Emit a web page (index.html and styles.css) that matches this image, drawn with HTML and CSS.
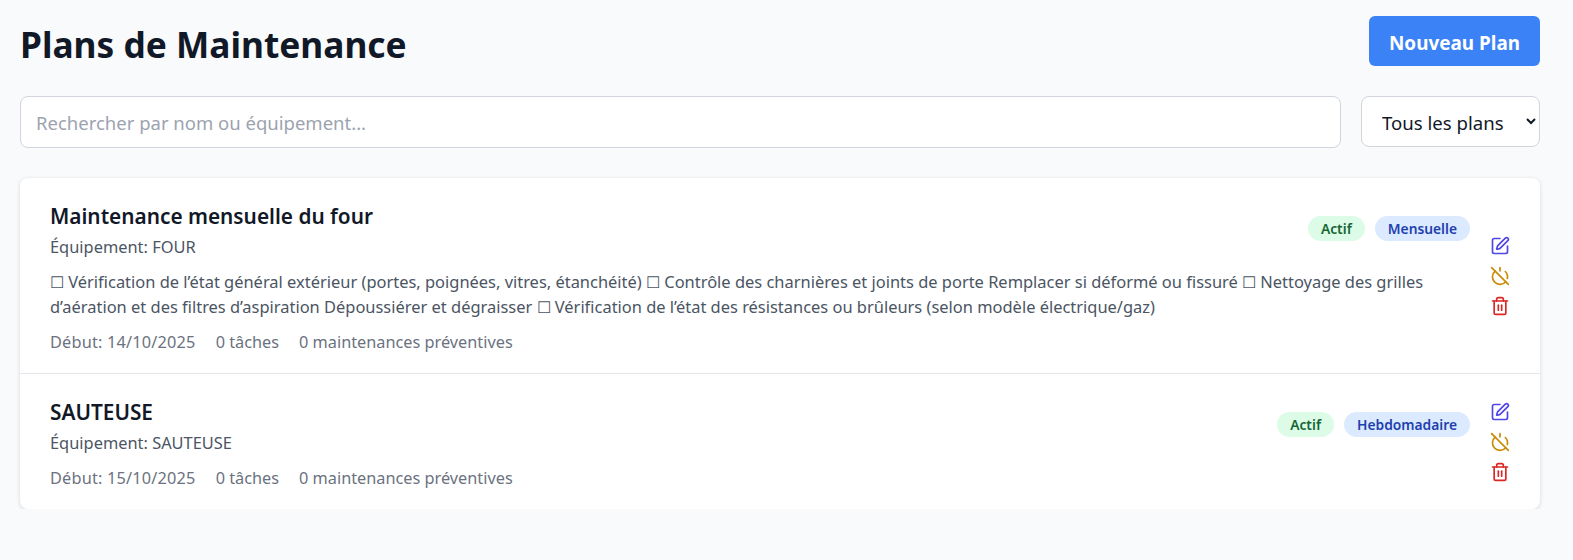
FILE: index.html
```html
<!DOCTYPE html>
<html lang="fr">
<head>
  <title>Plans de Maintenance</title>
  <meta name="viewport" content="width=device-width, initial-scale=1.0">
  <link rel="stylesheet" href="styles.css">
</head>
<body>

  <div class="page">
    <div class="page-header">
      <h1>Plans de Maintenance</h1>
      <button class="btn-new">Nouveau Plan</button>
    </div>

    <!-- Search and filter -->
    <div class="filters">
      <input class="search" type="text" placeholder="Rechercher par nom ou équipement...">
      <select class="filter-select">
        <option>Tous les plans</option>
      </select>
    </div>

    <div class="plan-list">

      <div class="plan">
        <div class="plan-main">
          <div class="plan-top">
            <div>
              <h2>Maintenance mensuelle du four</h2>
              <div class="equipment">Équipement: FOUR</div>
            </div>
            <div class="badges">
              <span class="badge badge-green">Actif</span>
              <span class="badge badge-blue">Mensuelle</span>
            </div>
          </div>
          <p class="description">☐ Vérification de l’état général extérieur (portes, poignées, vitres, étanchéité) ☐ Contrôle des charnières et joints de porte Remplacer si déformé ou fissuré ☐ Nettoyage des grilles d’aération et des filtres d’aspiration Dépoussiérer et dégraisser ☐ Vérification de l’état des résistances ou brûleurs (selon modèle électrique/gaz)</p>
          <div class="meta">
            <span class="meta-date">Début: 14/10/2025</span>
            <span>0 tâches</span>
            <span>0 maintenances préventives</span>
          </div>
        </div>
        <div class="actions">
          <svg class="icon icon-edit" viewBox="0 0 24 24"><path d="M12 3H5a2 2 0 0 0-2 2v14a2 2 0 0 0 2 2h14a2 2 0 0 0 2-2v-7"/><path d="M18.375 2.625a1 1 0 0 1 3 3l-9.013 9.014a2 2 0 0 1-.853.505l-2.873.84a.5.5 0 0 1-.62-.62l.84-2.873a2 2 0 0 1 .506-.852z"/></svg>
          <svg class="icon icon-power" viewBox="0 0 24 24"><path d="M18.36 6.64A9 9 0 0 1 20.77 15"/><path d="M6.16 6.16a9 9 0 1 0 12.68 12.68"/><path d="M12 2v4"/><path d="m2 2 20 20"/></svg>
          <svg class="icon icon-trash" viewBox="0 0 24 24"><path d="M3 6h18"/><path d="M19 6v14c0 1-1 2-2 2H7c-1 0-2-1-2-2V6"/><path d="M8 6V4c0-1 1-2 2-2h4c1 0 2 1 2 2v2"/><path d="M10 11v6"/><path d="M14 11v6"/></svg>
        </div>
      </div>

      <div class="plan">
        <div class="plan-main">
          <div class="plan-top">
            <div>
              <h2>SAUTEUSE</h2>
              <div class="equipment">Équipement: SAUTEUSE</div>
            </div>
            <div class="badges">
              <span class="badge badge-green">Actif</span>
              <span class="badge badge-blue">Hebdomadaire</span>
            </div>
          </div>
          <div class="meta">
            <span class="meta-date">Début: 15/10/2025</span>
            <span>0 tâches</span>
            <span>0 maintenances préventives</span>
          </div>
        </div>
        <div class="actions">
          <svg class="icon icon-edit" viewBox="0 0 24 24"><path d="M12 3H5a2 2 0 0 0-2 2v14a2 2 0 0 0 2 2h14a2 2 0 0 0 2-2v-7"/><path d="M18.375 2.625a1 1 0 0 1 3 3l-9.013 9.014a2 2 0 0 1-.853.505l-2.873.84a.5.5 0 0 1-.62-.62l.84-2.873a2 2 0 0 1 .506-.852z"/></svg>
          <svg class="icon icon-power" viewBox="0 0 24 24"><path d="M18.36 6.64A9 9 0 0 1 20.77 15"/><path d="M6.16 6.16a9 9 0 1 0 12.68 12.68"/><path d="M12 2v4"/><path d="m2 2 20 20"/></svg>
          <svg class="icon icon-trash" viewBox="0 0 24 24"><path d="M3 6h18"/><path d="M19 6v14c0 1-1 2-2 2H7c-1 0-2-1-2-2V6"/><path d="M8 6V4c0-1 1-2 2-2h4c1 0 2 1 2 2v2"/><path d="M10 11v6"/><path d="M14 11v6"/></svg>
        </div>
      </div>

    </div>
  </div>

</body>
</html>
```

FILE: styles.css
```css
body {
  background: #f9fafb;
  color: #111827;
  font-family: 'Noto Sans', sans-serif;
  margin: 0;
}

.page {
  padding: 16px 33px 0 20px;
}

.page-header {
  display: flex;
  justify-content: space-between;
  align-items: flex-start;
  margin-bottom: 27px;
}

h1 {
  font-size: 35.3px;
  font-weight: 700;
  line-height: 50px;
  margin: 0;
  padding-top: 3px;
}

.btn-new {
  width: 171px;
  height: 50px;
  padding: 3px 0 0;
  background: #3b82f6;
  color: #fff;
  font-family: inherit;
  font-size: 18.9px;
  font-weight: 700;
  border: none;
  border-radius: 6px;
}

.filters {
  display: flex;
  gap: 20px;
  margin-bottom: 30px;
}

.search {
  flex: 1;
  height: 52px;
  padding: 1px 15px 0;
  font-family: inherit;
  font-size: 18.5px;
  background: #fff;
  border: 1px solid #d1d5db;
  border-radius: 8px;
  box-sizing: border-box;
}

.search::placeholder {
  color: #9ca3af;
}

.filter-select {
  width: 179px;
  height: 51px;
  padding: 2px 16px 0;
  font-family: inherit;
  font-size: 18.6px;
  color: #111827;
  background: #fff;
  border: 1px solid #d1d5db;
  border-radius: 8px;
}

.plan-list {
  background: #fff;
  border-radius: 8px;
  box-shadow: 0 1px 4px rgba(0, 0, 0, 0.14);
}

.plan {
  display: flex;
  gap: 20px;
  padding: 20px 30px 19px;
  border-bottom: 1px solid #e5e7eb;
}

.plan:last-child {
  border-bottom: none;
}

.plan-main {
  flex: 1;
}

.plan-top {
  display: flex;
  justify-content: space-between;
  align-items: center;
}

h2 {
  font-size: 20.8px;
  font-weight: 600;
  line-height: 35px;
  margin: 0;
  padding-top: 1px;
}

.equipment {
  font-size: 16.4px;
  line-height: 24px;
  color: #4b5563;
  margin-top: 1px;
}

.badges {
  display: flex;
  gap: 10px;
}

.badge {
  padding: 0 13px;
  font-size: 13.8px;
  font-weight: 600;
  line-height: 25px;
  border-radius: 13px;
}

.badge-green {
  background: #dcfce7;
  color: #166534;
}

.badge-blue {
  background: #dbeafe;
  color: #1e40af;
}

.description {
  font-size: 16.45px;
  line-height: 25px;
  color: #4b5563;
  margin: 10px 0 0;
}

.meta {
  display: flex;
  gap: 20px;
  font-size: 16.3px;
  line-height: 24px;
  color: #6b7280;
  margin-top: 11px;
}

.meta-date {
  letter-spacing: 0.2px;
}

.actions {
  display: flex;
  flex-direction: column;
  justify-content: center;
  gap: 10px;
}

.icon {
  display: block;
  width: 20px;
  height: 20px;
  fill: none;
  stroke: currentColor;
  stroke-width: 2;
  stroke-linecap: round;
  stroke-linejoin: round;
}

.icon-edit {
  color: #4f46e5;
}

.icon-power {
  color: #ca8a04;
}

.icon-trash {
  color: #dc2626;
}
```
